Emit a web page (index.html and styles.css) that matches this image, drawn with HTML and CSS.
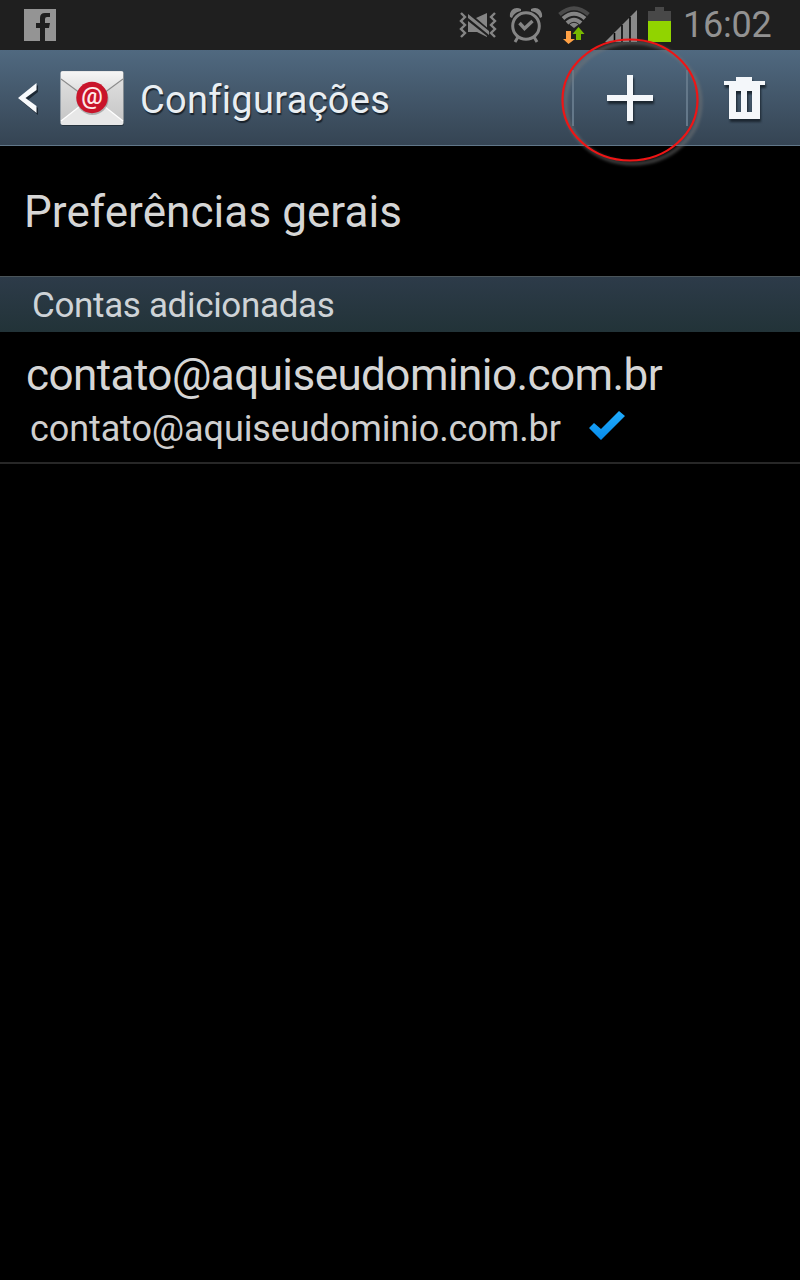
FILE: index.html
```html
<!DOCTYPE html>
<html lang="pt-BR">
<head>
<meta charset="utf-8">
<title>Configurações</title>
<link rel="stylesheet" href="styles.css">
</head>
<body>
<div class="screen">
  <div class="status">
    <svg class="facebook" width="32" height="33" viewBox="0 0 32 33"><path fill="#949494" d="M0 0H32V32H21V19H25L26 14H21V10Q21 8 23 8H26V4H21Q16 4 16 9V14H12V19H16V32H0Z"/></svg>
    <svg class="mute" width="40" height="32" viewBox="0 0 40 32">
      <path fill="none" stroke="#858585" stroke-width="2.400" d="M2 4L6 8L2 12L6 16L2 20L6 24L2 28M36 4L32 8L36 12L32 16L36 20L32 24L36 28"/>
      <path fill="#858585" d="M9 5L30 22V26L9 9ZM9 12L28 27V28L18 23H9ZM17 9L28 4V18.500Z"/>
    </svg>
    <svg class="alarm" width="34" height="36" viewBox="0 0 34 36" fill="none" stroke="#858585" stroke-width="3">
      <circle cx="17" cy="19" r="13.3"/>
      <path d="M10.500 16L15.500 21.500L23.500 14" stroke-width="3.400"/>
      <path d="M9 30L6 35M25 30L28 35"/>
      <path fill="#858585" stroke="none" d="M1 10C0 3 6 -1 12 2V4C7 5 4 8 3 11ZM33 10C34 3 28 -1 22 2V4C27 5 30 8 31 11Z"/>
    </svg>
    <svg class="wifi" width="34" height="38" viewBox="0 0 34 38">
      <g fill="none" stroke-width="4"><path stroke="#4a4a4a" d="M2.500 8.500Q17 -4 31.500 8.500"/><path stroke="#858585" d="M6 12.500Q17 3 28 12.500M10 17Q17 10.500 24 17"/></g>
      <path fill="#858585" d="M12.500 18.500Q17 15 21.500 18.500L17 22Z"/>
      <path fill="#ffa044" d="M9 25H14V33H18L11.500 38L6 33H9Z"/><path fill="#78b800" d="M21.500 21L27.500 28H24V34H19V28H15.500Z"/>
    </svg>
    <svg class="signal" width="34" height="32" viewBox="0 0 34 32"><path fill="#8a8a8a" d="M0 32L32 0V32Z"/><path stroke="#050505" stroke-width="1.600" d="M9.500 23V32M17 15V32M25 7V32"/></svg>
    <svg class="battery" width="23" height="35" viewBox="0 0 23 35"><path fill="#484848" d="M7 0H16V4H23V14H0V4H7Z"/><path fill="#91d400" d="M0 14H23V35H0Z"/></svg>
    <span class="clock">16:02</span>
  </div>
  <div class="bar">
    <svg class="back" width="22" height="34" viewBox="0 0 22 34"><path fill="#1d2935" d="M20 3V10L10 18L20 26V33L2 18Z"/><path fill="#f8fafc" d="M18.500 1V8L7.500 16L18.500 24V31L0 16Z"/></svg>
    <svg class="mail" width="64" height="56" viewBox="0 0 64 56">
      <defs><linearGradient id="paper" x2="0" y2="1"><stop stop-color="#f5f5f5"/><stop offset="1" stop-color="#d9d9d9"/></linearGradient><linearGradient id="side" x2="0" y2="1"><stop stop-color="#dedede"/><stop offset="1" stop-color="#c6c6c6"/></linearGradient></defs>
      <rect x="1" y="2" width="63" height="54" rx="2" fill="#27343f"/>
      <rect x=".5" y="1" width="63" height="54" rx="2" fill="#e7e7e7"/>
      <path fill="url(#side)" d="M1 10L28 29L1 51ZM63 10L36 29L63 51Z"/>
      <path fill="none" stroke="#fff" stroke-width="1.200" d="M1 51L24 33M63 51L40 33"/>
      <path fill="url(#paper)" d="M1 2H63V9L40 25H24L1 9Z"/>
      <path fill="none" stroke="#8d8d8d" stroke-width="1.200" d="M1 9L20 23M63 9L44 23"/>
      <circle cx="32.500" cy="29" r="16" fill="#777" opacity=".5"/><circle cx="32" cy="27.500" r="15.700" fill="#c9142a"/>
      <text x="32" y="34" text-anchor="middle" class="at">@</text>
    </svg>
    <h1 class="title">Configurações</h1>
    <div class="add"><svg width="50" height="52" viewBox="0 0 50 52"><path class="icon-shadow" d="M21 1H27V21H47V27H27V47H21V27H1V21H21Z"/><path fill="#f4f7fa" d="M21 1H27V21H47V27H27V47H21V27H1V21H21Z"/></svg></div>
    <svg class="trash" width="44" height="46" viewBox="0 0 44 46" fill-rule="evenodd"><path class="icon-shadow" d="M1 4H13V0H29V4H42V8H37V42H6V8H1ZM13 14V35H18V14ZM24 14V35H29V14Z"/><path fill="#f4f7fa" d="M1 4H13V0H29V4H42V8H37V42H6V8H1ZM13 14V35H18V14ZM24 14V35H29V14Z"/></svg>
  </div>
  <div class="general">Preferências gerais</div>
  <div class="section">Contas adicionadas</div>
  <div class="account">
    <div class="name">contato@aquiseudominio.com.br</div>
    <div class="detail"><span class="address">contato@aquiseudominio.com.br</span>
      <svg class="check" width="36" height="29" viewBox="0 0 36 29"><defs><linearGradient id="blue" x2="0" y2="1"><stop stop-color="#20adff"/><stop offset="1" stop-color="#078bea"/></linearGradient></defs><path fill="url(#blue)" d="M0 17L5 12L12 18L30 0L36 5L12 29Z"/></svg>
    </div>
  </div>
  <svg class="highlight" width="150" height="136" viewBox="0 0 150 136"><ellipse class="ring-shadow" cx="77" cy="68" rx="67.500" ry="60.500"/><ellipse cx="74" cy="65" rx="67.500" ry="60.500" fill="none" stroke="#ee1515" stroke-width="2.200"/></svg>
</div>
</body>
</html>
```
FILE: styles.css
```css
body { margin: 0; background: #000; }
.screen { position: relative; width: 800px; height: 1280px; overflow: hidden; background: #000; color: #d6d6d6; font-family: Roboto, sans-serif; }
svg { display: block; flex: none; }
.status { box-sizing: border-box; height: 50px; display: flex; align-items: flex-start; padding-left: 24px; background: #1f1f1f; }
.facebook { margin-top: 9px; }
.mute { margin: 9px 0 0 403px; }
.alarm { margin: 7px 0 0 10px; }
.wifi { margin: 6px 0 0 14px; }
.signal { margin: 10px 0 0 14px; }
.battery { margin: 7px 0 0 9px; }
.clock { margin-left: 12px; font-size: 36px; line-height: 50px; color: #929292; font-weight: 400; letter-spacing: -0.2px; white-space: nowrap; }
.bar { box-sizing: border-box; height: 96px; display: flex; align-items: flex-start; padding-left: 18px; background: linear-gradient(#506980, #354453); border-bottom: 1px solid #617789; }
.back { margin-top: 32px; }
.mail { margin: 20px 0 0 20px; }
.at { font: 500 24px Roboto, sans-serif; fill: #ffe9e9; }
.title { margin: 2px 0 0 16px; width: 432px; font-size: 38px; font-weight: 400; line-height: 96px; letter-spacing: 0.3px; color: #e9eef2; text-shadow: 1px 2px 1px #18222c; }
.add { box-sizing: border-box; width: 116px; height: 56px; margin-top: 20px; padding: 4px 0 0 32px; border-left: 2px solid #64788a; border-right: 2px solid #64788a; }
.trash { margin: 27px 0 0 35px; overflow: visible; }
.icon-shadow { fill: #1b2630; filter: blur(1px); transform: translate(1px, 3px); }
.general { box-sizing: border-box; height: 130px; padding-left: 24px; font-size: 44px; line-height: 132px; letter-spacing: 0.08px; }
.section { box-sizing: border-box; height: 56px; padding-left: 32px; border-top: 1px solid #4a5459; background: linear-gradient(#2d3b49, #223338); font-size: 35px; line-height: 57px; letter-spacing: -0.34px; color: #ced3d7; }
.account { box-sizing: border-box; height: 132px; padding-top: 18px; border-bottom: 2px solid #272727; }
.name { height: 52px; padding-left: 26px; font-size: 44px; line-height: 51px; letter-spacing: -0.56px; }
.detail { display: flex; padding-left: 30px; }
.address { font-size: 36px; line-height: 54px; letter-spacing: -0.1px; color: #cfcfcf; }
.check { margin: 9px 0 0 28px; }
.highlight { position: absolute; left: 556px; top: 35px; }
.ring-shadow { fill: none; stroke: #777; stroke-width: 4px; opacity: .5; filter: blur(1.5px); }
```
